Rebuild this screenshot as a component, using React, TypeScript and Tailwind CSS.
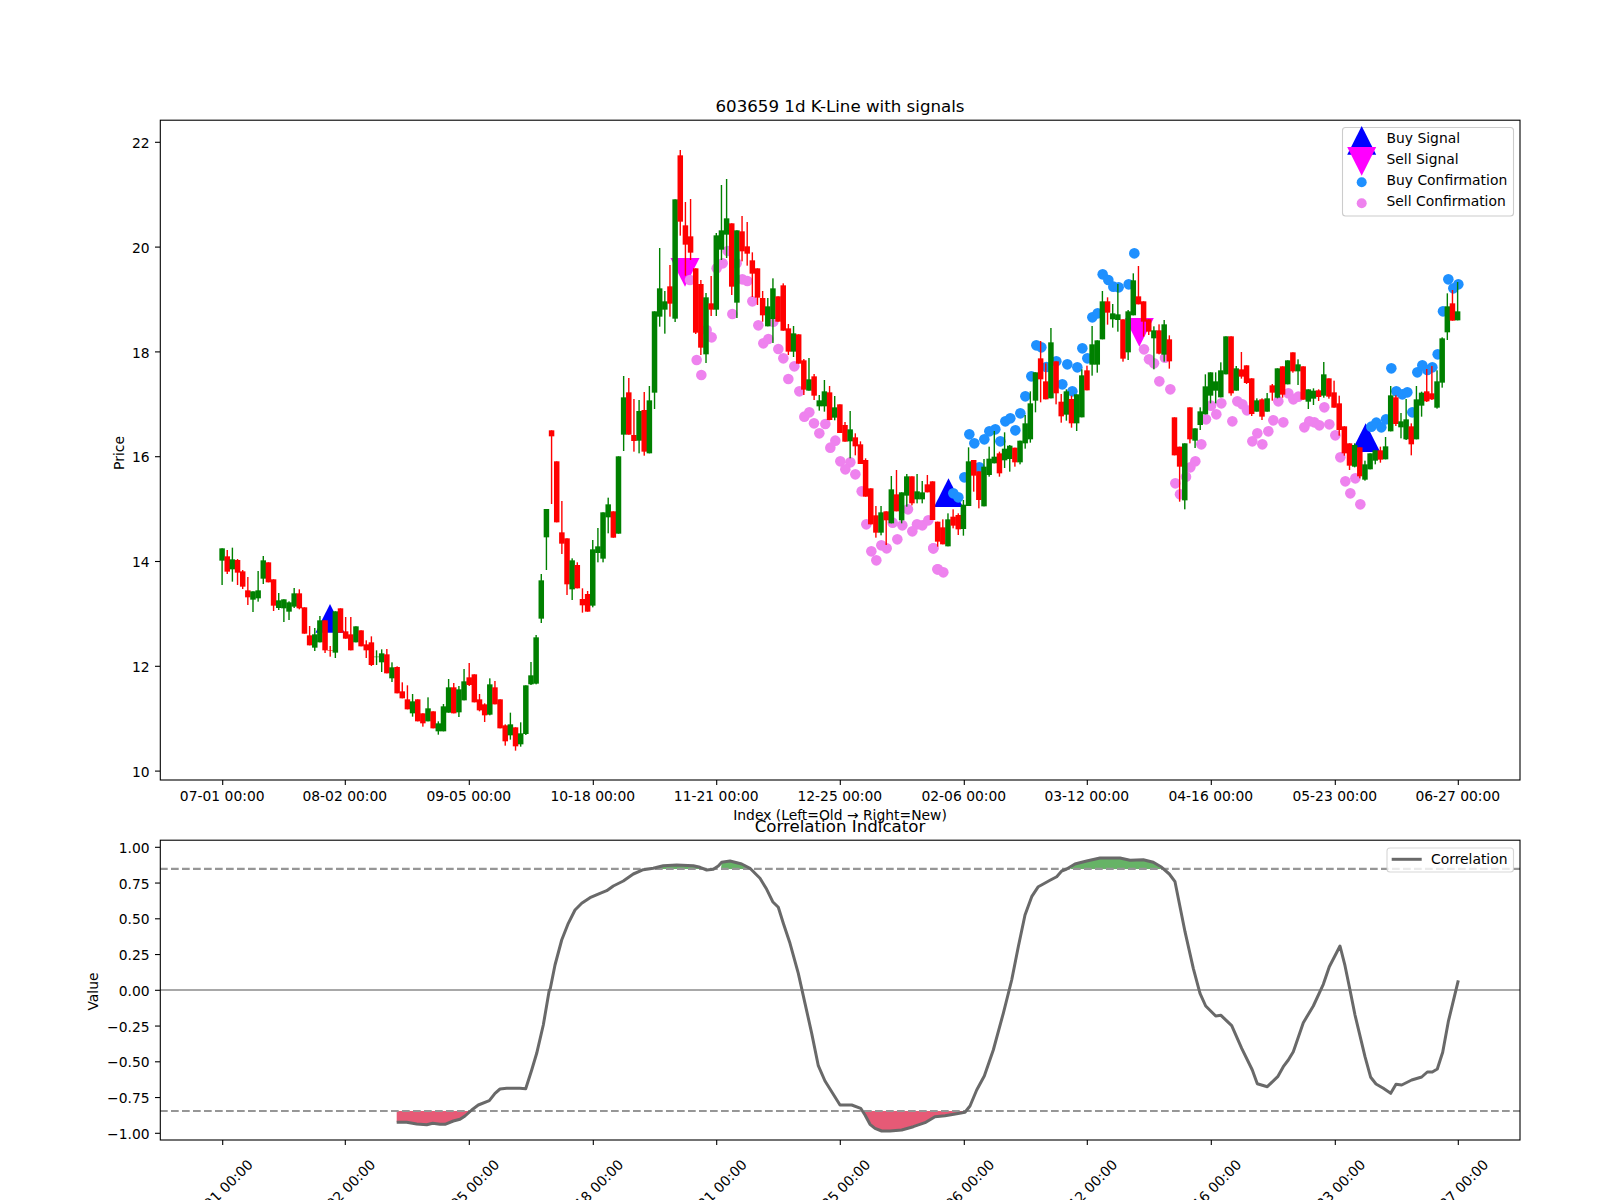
type Row = [string, number, number, number, number];

const G = "g";
const R = "r";

const groups: { oy: number; rows: Row[] }[] = [
  {
    oy: 380,
    rows: [
      [G, 505, 542, 505, 615], [R, 529, 575, 510, 582], [G, 538, 568, 503, 605], [R, 540, 578, 537, 615],
      [R, 574, 620, 570, 627], [R, 631, 652, 591, 675], [G, 634, 659, 634, 696], [G, 631, 655, 573, 665],
      [G, 541, 596, 528, 612], [R, 547, 607, 547, 607], [R, 598, 677, 598, 693], [G, 661, 684, 639, 690],
      [G, 658, 685, 658, 726], [G, 667, 695, 664, 720], [G, 640, 680, 624, 684], [R, 640, 685, 628, 688],
      [R, 682, 761, 682, 761], [R, 766, 796, 738, 796], [G, 763, 803, 744, 813], [G, 721, 787, 708, 787],
      [R, 721, 811, 721, 819], [R, 810, 811, 798, 830], [G, 694, 818, 694, 834], [R, 685, 758, 685, 758],
      [R, 754, 776, 711, 776], [R, 763, 811, 711, 811], [G, 739, 787, 739, 787], [R, 751, 799, 751, 799],
      [R, 793, 811, 781, 834], [R, 787, 855, 769, 858], [G, 830, 831, 811, 855], [G, 820, 847, 808, 876],
      [R, 823, 880, 807, 880], [G, 862, 895, 847, 906], [R, 861, 940, 859, 940], [R, 934, 955, 907, 955],
      [R, 958, 988, 916, 988], [G, 964, 1000, 942, 1010], [R, 958, 1024, 958, 1024], [R, 1000, 1030, 1000, 1040],
      [G, 985, 1024, 952, 1024], [R, 994, 1045, 994, 1045], [G, 1030, 1054, 1024, 1064], [G, 979, 1054, 972, 1054],
      [G, 922, 998, 897, 998], [R, 922, 1000, 909, 1000], [G, 928, 997, 918, 1011], [G, 904, 961, 867, 961],
      [R, 892, 915, 849, 918], [R, 883, 967, 883, 967], [R, 958, 991, 942, 994], [R, 973, 1006, 970, 1026],
      [G, 913, 1004, 895, 1006], [R, 922, 973, 903, 973], [R, 958, 1045, 958, 1045], [R, 1036, 1084, 1033, 1097],
      [G, 1033, 1066, 998, 1079], [R, 1042, 1099, 1042, 1112], [G, 1060, 1093, 1027, 1100], [G, 916, 1062, 916, 1065],
      [G, 886, 913, 846, 915], [G, 772, 911, 765, 913], [G, 601, 716, 582, 729],
    ],
  },
  {
    oy: 400,
    rows: [
      [G, 327, 412, 327, 510], [R, 91, 109, 91, 312], [R, 184, 367, 184, 367], [R, 397, 431, 303, 462],
      [R, 415, 553, 415, 585], [G, 481, 568, 475, 600], [R, 495, 565, 487, 565], [R, 597, 616, 565, 638],
      [R, 582, 635, 573, 635], [G, 448, 617, 420, 622], [G, 439, 459, 384, 487], [G, 337, 476, 337, 487],
      [G, 313, 352, 293, 400], [R, 334, 413, 334, 413], [G, 169, 401, 169, 401], [G, -8, 104, -72, 153],
      [R, -23, 104, -66, 104], [R, 105, 123, -3, 155], [G, 33, 122, 0, 160], [R, 30, 155, -24, 167], [G, 1, 160, -42, 160],
    ],
  },
  {
    oy: 120,
    rows: [
      [G, 574, 818, 574, 867], [G, 505, 590, 384, 620], [G, 544, 569, 513, 641], [R, 499, 551, 435, 590],
      [G, 238, 596, 238, 606], [R, 106, 305, 90, 347], [R, 316, 374, 246, 467], [R, 349, 398, 237, 420],
      [R, 445, 638, 445, 642], [R, 492, 683, 480, 705], [G, 532, 703, 519, 729], [R, 550, 569, 468, 588],
      [G, 346, 569, 339, 588], [G, 331, 389, 195, 420], [G, 295, 344, 177, 414], [R, 310, 500, 310, 525],
      [G, 331, 548, 331, 594], [R, 334, 394, 288, 424], [R, 379, 401, 306, 437], [R, 421, 461, 397, 531],
      [R, 445, 533, 445, 555], [R, 534, 586, 513, 605], [G, 559, 619, 534, 619], [G, 505, 597, 475, 669],
      [R, 529, 605, 529, 605], [R, 496, 632, 490, 632], [R, 625, 695, 612, 705], [G, 640, 695, 618, 711],
      [R, 643, 731, 643, 731], [R, 721, 809, 717, 825], [G, 778, 812, 714, 812], [R, 769, 827, 762, 840],
      [G, 841, 859, 825, 872], [G, 814, 859, 780, 875], [R, 817, 900, 798, 901], [G, 862, 893, 828, 901],
      [R, 853, 939, 853, 939],
    ],
  },
  {
    oy: 400,
    rows: [
      [R, 75, 125, 66, 125], [G, 88, 124, 33, 175], [R, 112, 139, 100, 166], [R, 133, 192, 124, 192],
      [R, 180, 290, 175, 290], [R, 265, 373, 265, 373], [R, 346, 398, 318, 413], [G, 337, 398, 318, 406],
      [R, 334, 361, 334, 435], [G, 268, 370, 228, 370], [R, 283, 334, 210, 334], [G, 277, 361, 277, 370],
      [G, 229, 287, 222, 320], [R, 229, 310, 229, 316], [G, 274, 298, 222, 310], [G, 277, 298, 243, 310],
      [R, 253, 277, 225, 277], [R, 244, 360, 244, 360],
    ],
  },
  {
    oy: 230,
    rows: [
      [R, 875, 935, 875, 950], [R, 892, 943, 868, 943], [G, 868, 949, 850, 949], [R, 860, 887, 838, 895],
      [R, 855, 898, 850, 915], [G, 824, 897, 810, 917], [G, 694, 828, 652, 828], [R, 690, 737, 690, 785],
      [R, 724, 810, 724, 835], [G, 710, 829, 687, 829], [G, 686, 735, 650, 740], [G, 680, 700, 603, 700],
      [R, 670, 730, 665, 740], [G, 656, 691, 607, 714], [G, 647, 687, 645, 725], [R, 653, 697, 653, 710],
      [G, 632, 697, 632, 703], [G, 580, 640, 555, 656], [G, 520, 628, 484, 638], [G, 427, 512, 427, 547],
      [R, 385, 448, 333, 517], [R, 454, 508, 400, 508], [G, 337, 505, 294, 505], [R, 394, 490, 394, 523],
      [R, 515, 559, 492, 578], [G, 484, 554, 478, 572], [R, 507, 580, 497, 593], [G, 493, 580, 493, 603],
      [G, 436, 562, 418, 562], [R, 421, 481, 407, 481], [G, 343, 404, 288, 437], [G, 331, 404, 331, 428],
      [G, 214, 328, 183, 328], [R, 214, 248, 202, 284], [G, 250, 268, 222, 293], [G, 253, 270, 162, 305],
      [R, 268, 386, 268, 395], [G, 244, 367, 240, 390], [G, 151, 256, 130, 256], [R, 199, 223, 108, 223],
      [R, 214, 275, 214, 320], [R, 268, 305, 268, 315], [G, 301, 325, 289, 418], [R, 301, 371, 283, 373],
      [G, 283, 374, 270, 395], [R, 328, 394, 316, 416], [R, 562, 676, 562, 676], [R, 650, 710, 650, 815],
      [G, 640, 811, 640, 838], [R, 532, 628, 532, 640], [G, 595, 632, 595, 654], [G, 544, 585, 532, 600],
      [G, 469, 553, 433, 553], [G, 427, 497, 427, 520], [G, 454, 482, 427, 520], [G, 421, 502, 397, 502],
      [G, 319, 433, 319, 433], [R, 319, 490, 319, 497], [G, 415, 482, 408, 482], [R, 418, 440, 366, 446],
      [R, 406, 459, 406, 462], [R, 445, 552, 445, 558], [G, 511, 545, 505, 545], [R, 508, 560, 505, 570],
      [G, 505, 545, 489, 545], [R, 466, 488, 462, 512], [G, 415, 503, 415, 505], [R, 409, 494, 409, 503],
      [G, 391, 463, 391, 463], [R, 367, 424, 367, 428], [G, 403, 424, 388, 465], [R, 409, 509, 409, 509],
      [G, 478, 515, 478, 537], [G, 482, 506, 475, 525], [R, 481, 501, 478, 513], [G, 433, 497, 396, 503],
      [R, 445, 500, 445, 506], [R, 487, 533, 452, 533], [R, 520, 600, 497, 617], [R, 589, 670, 589, 677],
      [R, 640, 707, 640, 720], [G, 645, 710, 640, 712], [R, 652, 739, 652, 745], [G, 703, 749, 692, 752],
      [G, 670, 718, 670, 718], [G, 661, 692, 661, 703], [R, 661, 689, 650, 698], [G, 649, 688, 621, 688],
      [G, 496, 604, 468, 604], [R, 502, 582, 496, 588], [G, 574, 592, 549, 625], [G, 568, 628, 507, 630],
      [R, 589, 643, 580, 676], [G, 508, 628, 468, 628], [G, 488, 527, 485, 560], [R, 484, 514, 417, 516],
      [R, 490, 508, 408, 510], [G, 454, 533, 421, 536], [G, 325, 458, 322, 473], [G, 229, 307, 190, 330],
      [R, 220, 272, 180, 272], [G, 244, 271, 156, 271],
    ],
  },
];

const candles = groups.flatMap((g) =>
  g.rows.map(([c, bt, bb, wt, wb]) => ({
    c: c === G ? "#008000" : "#ff0000",
    bt: g.oy + bt / 3,
    bb: g.oy + bb / 3,
    wt: g.oy + wt / 3,
    wb: g.oy + wb / 3,
  }))
);

const cx = (i: number) => 222.1 + 5.148 * i;

type P = [number, number];
const conv = (ox: number, oy: number, pts: P[]): P[] => pts.map(([x, y]) => [ox + x / 3, oy + y / 3]);
const str = (pts: P[]) => pts.map(([x, y]) => `${x.toFixed(1)},${y.toFixed(1)}`).join(" ");

const violet: P[] = [
  ...conv(540, 120, [[500, 630], [515, 652], [470, 720], [484, 765], [450, 480], [530, 445], [548, 430], [563, 393], [590, 430], [607, 478], [622, 483], [637, 544], [577, 582], [655, 616], [670, 670], [685, 657], [700, 605], [715, 687], [730, 715], [763, 739], [745, 777], [778, 814]]),
  ...conv(540, 400, [[793, 50], [808, 37], [822, 70], [856, 72], [838, 100], [886, 122], [871, 143], [901, 184], [931, 187], [916, 208], [946, 223], [965, 274], [979, 373], [1058, 368], [1087, 376], [1104, 328], [1117, 394], [1131, 373], [1147, 376], [1165, 361], [994, 454], [1024, 436], [1040, 445], [1009, 481], [1072, 418], [1180, 445], [1192, 508]]),
  ...conv(930, 230, [[10, 955], [24, 1018], [40, 1027], [642, 358], [657, 388], [672, 400], [705, 383], [688, 454], [721, 478], [736, 760], [750, 793], [768, 740], [781, 712], [796, 694], [814, 643]]),
  ...conv(1200, 230, [[18, 568], [33, 527], [49, 553], [64, 520], [97, 574], [112, 514], [127, 523], [141, 541], [157, 634], [172, 610], [187, 643], [205, 604], [220, 571], [235, 514], [250, 577], [265, 490], [280, 508], [295, 500], [313, 592], [328, 574], [343, 577], [358, 586], [373, 532], [388, 583], [406, 616], [421, 682], [436, 754], [451, 790], [466, 745], [481, 823]]),
];

const blue: P[] = [
  ...conv(930, 230, [[70, 790], [85, 802], [103, 742], [148, 712], [118, 613], [133, 640], [163, 628], [178, 604], [196, 598], [211, 634], [226, 574], [241, 565], [256, 601], [271, 550], [286, 499], [304, 439], [319, 346], [334, 352], [349, 411], [379, 394], [397, 463], [412, 403], [427, 484], [442, 412], [457, 355], [472, 385], [487, 262], [503, 250], [518, 133], [535, 150], [550, 170], [566, 172], [596, 163], [613, 70]]),
  ...conv(1200, 230, [[514, 590], [529, 578], [544, 592], [558, 568], [574, 415], [589, 484], [607, 493], [622, 487], [637, 547], [652, 427], [667, 406], [682, 420], [697, 412], [713, 373], [729, 244], [745, 148], [760, 175], [775, 163]]),
];

const corr: P[] = [
  ...conv(60, 770, [[1010, 1057], [1040, 1057], [1070, 1062], [1100, 1064], [1118, 1060], [1140, 1063], [1155, 1063], [1180, 1053], [1200, 1048], [1215, 1038], [1235, 1020], [1255, 1005], [1288, 992], [1305, 970], [1320, 957], [1340, 955], [1380, 955], [1397, 956], [1415, 900], [1430, 850], [1450, 765], [1468, 660]]),
  ...conv(550, 800, [[0, 570], [15, 495], [35, 420], [55, 370], [75, 330], [95, 310], [120, 293], [150, 280], [170, 272], [190, 258], [220, 243], [250, 222], [280, 209], [310, 205], [340, 197], [380, 195], [430, 197], [450, 202], [470, 210], [490, 208], [505, 198], [515, 187], [540, 183], [575, 192], [600, 205], [630, 235], [650, 268], [668, 305], [685, 322], [700, 370], [720, 430], [745, 520], [765, 610], [785, 700], [805, 797], [825, 843], [870, 915], [905, 915], [932, 925], [945, 945], [960, 973], [975, 985], [995, 993], [1020, 993], [1055, 990], [1090, 980], [1125, 968], [1155, 950], [1185, 947], [1220, 941], [1245, 937], [1260, 918], [1280, 870], [1303, 828], [1330, 750], [1360, 640], [1385, 540], [1405, 440], [1425, 345], [1445, 290], [1465, 260], [1480, 252]]),
  ...conv(1050, 800, [[0, 241], [20, 230], [35, 213], [50, 207], [75, 192], [110, 183], [150, 174], [210, 174], [240, 181], [280, 179], [310, 187], [335, 202], [358, 222], [375, 245], [390, 320], [405, 395], [430, 505], [450, 580], [467, 618], [497, 648], [513, 646], [545, 677], [575, 745], [607, 810], [622, 851], [652, 860], [683, 830], [700, 800], [715, 780], [730, 755], [760, 668], [790, 618], [820, 553], [838, 500], [870, 438], [885, 497], [900, 570], [915, 645], [945, 770], [962, 832], [978, 852], [1000, 865], [1022, 880], [1038, 853], [1055, 855], [1085, 840], [1115, 831], [1132, 816], [1147, 816], [1162, 807], [1178, 757], [1195, 665], [1225, 541]]),
];

const greenFills: P[][] = [
  conv(550, 800, [[325, 207], [340, 197], [380, 195], [430, 197], [450, 202], [455, 207]]),
  conv(550, 800, [[513, 207], [515, 187], [540, 183], [575, 192], [600, 207]]),
  conv(1050, 800, [[60, 207], [75, 192], [110, 183], [150, 174], [210, 174], [240, 181], [280, 179], [310, 187], [335, 207]]),
];
const redFills: P[][] = [
  conv(60, 770, [[1010, 1023], [1010, 1057], [1040, 1057], [1070, 1062], [1100, 1064], [1118, 1060], [1140, 1063], [1155, 1063], [1180, 1053], [1200, 1048], [1215, 1038], [1232, 1023]]),
  conv(550, 800, [[945, 933], [945, 945], [960, 973], [975, 985], [995, 993], [1020, 993], [1055, 990], [1090, 980], [1125, 968], [1155, 950], [1185, 947], [1220, 941], [1245, 937], [1248, 933]]),
];

const xTicks: [number, string][] = [
  [222.7, "07-01 00:00"],
  [345.3, "08-02 00:00"],
  [469.3, "09-05 00:00"],
  [593.3, "10-18 00:00"],
  [716.7, "11-21 00:00"],
  [840.3, "12-25 00:00"],
  [964.3, "02-06 00:00"],
  [1087.3, "03-12 00:00"],
  [1211.3, "04-16 00:00"],
  [1335.3, "05-23 00:00"],
  [1458.3, "06-27 00:00"],
];

const priceTicks = [22, 20, 18, 16, 14, 12, 10];
const corrTicks: [number, string][] = [
  [1, "1.00"], [0.75, "0.75"], [0.5, "0.50"], [0.25, "0.25"], [0, "0.00"],
  [-0.25, "\u22120.25"], [-0.5, "\u22120.50"], [-0.75, "\u22120.75"], [-1, "\u22121.00"],
];
const py = (v: number) => 771.1 - (v - 10) * 52.4;
const cy = (v: number) => 990.3 - 143 * v;

const up = (x: number, top: number, hw = 14.5, h = 28.7) => `${x},${top} ${x + hw},${top + h} ${x - hw},${top + h}`;
const down = (x: number, top: number, hw = 14.5, h = 28.7) => `${x - hw},${top} ${x + hw},${top} ${x},${top + h}`;

export default function App() {
  return (
    <div className="w-[1600px] h-[1200px] overflow-hidden bg-white">
      <svg
        viewBox="0 0 1600 1200"
        className="block w-[1600px] h-[1200px] font-['DejaVu_Sans',sans-serif] text-[13.89px]"
        fill="#000"
      >
        {/* main price axes */}
        <text x="840" y="112" textAnchor="middle" className="text-[16.67px]">603659 1d K-Line with signals</text>

        <polygon points={up(330, 604)} fill="#0000ff" />
        <polygon points={up(948.5, 478.3)} fill="#0000ff" />
        <polygon points={up(1365.7, 423.3)} fill="#0000ff" />
        <polygon points={down(685, 258)} fill="#ff00ff" />
        <polygon points={down(1139.3, 318)} fill="#ff00ff" />

        {violet.map(([x, y], i) => (
          <circle key={i} cx={x} cy={y} r="5.3" fill="#ee82ee" />
        ))}
        {blue.map(([x, y], i) => (
          <circle key={i} cx={x} cy={y} r="5.3" fill="#1e90ff" />
        ))}

        {candles.map((k, i) => (
          <g key={i} fill={k.c}>
            <rect x={cx(i) - 0.7} y={k.wt} width="1.4" height={Math.max(k.wb - k.wt, 0)} />
            <rect x={cx(i) - 2.75} y={k.bt} width="5.5" height={Math.max(k.bb - k.bt, 0.5)} />
          </g>
        ))}

        <rect x="160.3" y="120.2" width="1359.7" height="659.8" fill="none" stroke="#000" strokeWidth="1.1" />

        {priceTicks.map((v) => (
          <g key={v}>
            <line x1="155" x2="160" y1={py(v)} y2={py(v)} stroke="#000" strokeWidth="1.1" />
            <text x="149.6" y={py(v) + 5.6} textAnchor="end">{v}</text>
          </g>
        ))}
        {xTicks.map(([x, label]) => (
          <g key={label}>
            <line x1={x} x2={x} y1="780" y2="785" stroke="#000" strokeWidth="1.1" />
            <text x={x - 0.5} y="800.5" textAnchor="middle">{label}</text>
          </g>
        ))}
        <text transform="translate(124 453) rotate(-90)" textAnchor="middle">Price</text>
        <text x="840" y="820" textAnchor="middle">Index (Left=Old → Right=New)</text>

        {/* main legend */}
        <rect x="1342.5" y="127.5" width="171" height="88.5" rx="3" fill="#fff" fillOpacity="0.8" stroke="#ccc" strokeWidth="1.1" />
        <polygon points={up(1361.7, 126)} fill="#0000ff" />
        <polygon points={down(1361.7, 147)} fill="#ff00ff" />
        <circle cx="1361.7" cy="182.3" r="5" fill="#1e90ff" />
        <circle cx="1361.7" cy="203.3" r="5" fill="#ee82ee" />
        <text x="1386.5" y="143">Buy Signal</text>
        <text x="1386.5" y="164">Sell Signal</text>
        <text x="1386.5" y="185">Buy Confirmation</text>
        <text x="1386.5" y="206">Sell Confirmation</text>

        {/* correlation axes */}
        {greenFills.map((p, i) => (
          <polygon key={i} points={str(p)} fill="#008000" fillOpacity="0.6" />
        ))}
        {redFills.map((p, i) => (
          <polygon key={i} points={str(p)} fill="#dc143c" fillOpacity="0.7" />
        ))}
        <line x1="160" x2="1520" y1="868.8" y2="868.8" stroke="#969696" strokeWidth="2.2" strokeDasharray="7.7 3.3" />
        <line x1="160" x2="1520" y1="1111" y2="1111" stroke="#969696" strokeWidth="2.2" strokeDasharray="7.7 3.3" />
        <line x1="160" x2="1520" y1="990" y2="990" stroke="#a8a8a8" strokeWidth="2.2" />
        <polyline points={str(corr)} fill="none" stroke="#696969" strokeWidth="3" strokeLinejoin="round" />

        <rect x="160.3" y="840.2" width="1359.7" height="299.8" fill="none" stroke="#000" strokeWidth="1.1" />
        {corrTicks.map(([v, label]) => (
          <g key={label}>
            <line x1="155" x2="160" y1={cy(v)} y2={cy(v)} stroke="#000" strokeWidth="1.1" />
            <text x="149.6" y={cy(v) + 5.5} textAnchor="end">{label}</text>
          </g>
        ))}
        {xTicks.map(([x, label]) => (
          <g key={label}>
            <line x1={x} x2={x} y1="1140" y2="1145" stroke="#000" strokeWidth="1.1" />
            <text transform={`translate(${x - 2.5} 1192) rotate(-45)`} textAnchor="middle" dominantBaseline="central">{label}</text>
          </g>
        ))}
        <text transform="translate(98 991.5) rotate(-90)" textAnchor="middle">Value</text>
        <text x="840" y="831.5" textAnchor="middle" className="text-[16.67px]">Correlation Indicator</text>

        {/* correlation legend */}
        <rect x="1387" y="848" width="126.5" height="24" rx="3" fill="#fff" fillOpacity="0.8" stroke="#ccc" strokeOpacity="0.8" strokeWidth="1.1" />
        <line x1="1391.7" x2="1421.7" y1="859.3" y2="859.3" stroke="#696969" strokeWidth="3" />
        <text x="1431" y="864">Correlation</text>
      </svg>
    </div>
  );
}
